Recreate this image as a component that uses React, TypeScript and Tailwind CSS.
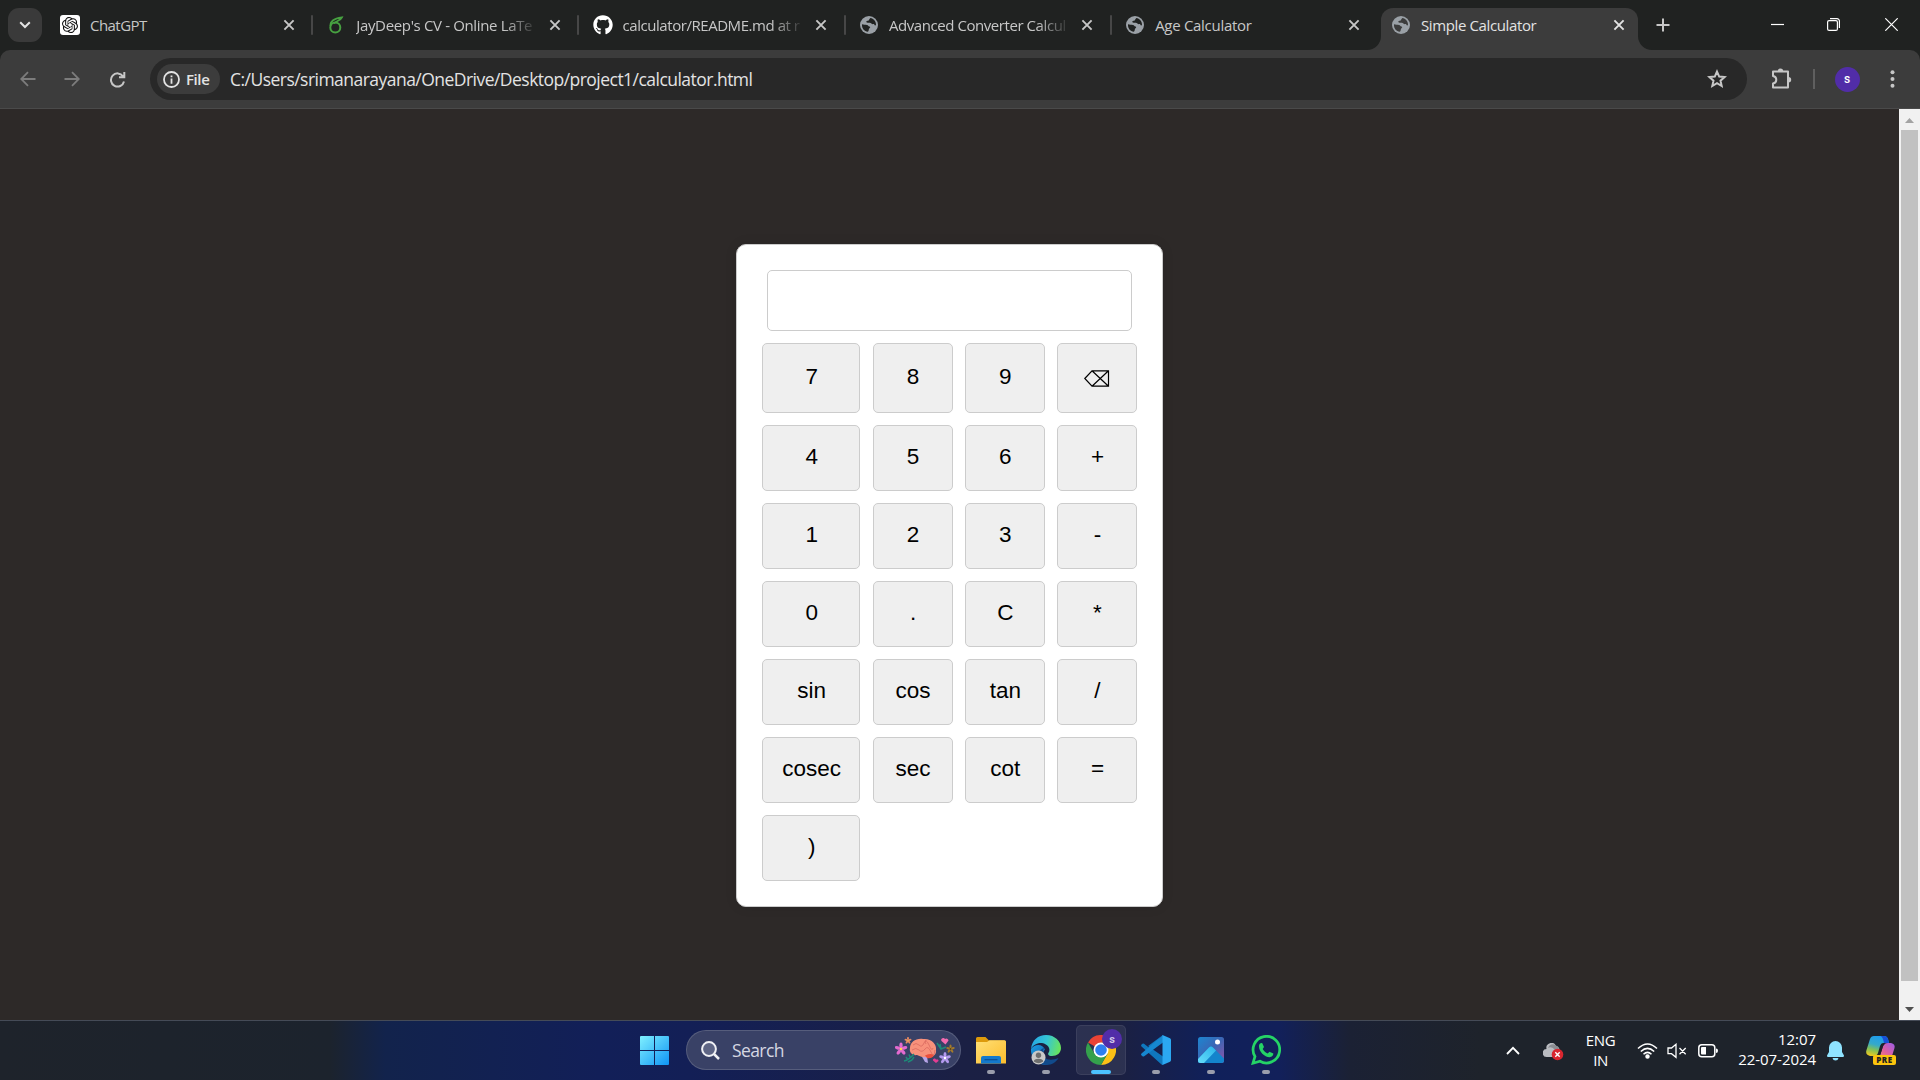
import React from "react";
import { FaGithub } from "react-icons/fa";
import { SiOpenai } from "react-icons/si";

const SEG = "font-['Open_Sans','Noto_Sans',sans-serif]";

function CloseX({ color = "#c8c8c8" }: { color?: string }) {
  return (
    <svg width="12" height="12" viewBox="0 0 12 12" stroke={color} strokeWidth="1.9" className="shrink-0">
      <path d="M1.4 1.4 10.6 10.6M10.6 1.4 1.4 10.6" />
    </svg>
  );
}

function Globe({ bg = "#202221" }: { bg?: string }) {
  return (
    <svg width="18" height="18" viewBox="0 0 18 18">
      <circle cx="9" cy="9" r="9" fill="#9aa0a6" />
      <path d="M2 8.200C3.500 8.900 5.500 8.600 7 9 8.300 9.200 8.200 10.300 9.400 10.400 10.400 10.500 10.400 11.300 9.700 11.900 9 12.400 8.900 13 8.800 13.800 8.700 14.700 8.300 15.400 7.900 15.800 4.200 15.300 1.700 12.400 2 8.200Z" fill={bg} />
      <path d="M10.400 2.100C13.600 2.700 16 5.500 16 8.800 15.700 9.600 15 9.600 14.600 8.900 14.100 8 13 8.500 12.200 8.100 11.300 7.600 10.900 6.700 9.700 6.800 8.300 6.900 6.300 7 6.300 5.800 6.300 4.900 7.300 5 8.200 4.800 9.300 4.500 9.200 3 10.400 2.100Z" fill={bg} />
    </svg>
  );
}

function ChatIcon() {
  return (
    <span className="flex size-5 items-center justify-center rounded-[3px] bg-white">
      <SiOpenai size={16} color="#111" />
    </span>
  );
}

function Overleaf() {
  return (
    <svg width="16" height="18" viewBox="0 0 16 18" fill="none" stroke="#47a141" strokeWidth="2">
      <circle cx="7.300" cy="11.500" r="5" />
      <path d="M2.500 10C2 6 5.500 2.500 14 1.300 12.500 4.500 9 4.500 6 7.500" strokeWidth="1.700" />
    </svg>
  );
}

type TabInfo = { title: string; icon: React.ReactNode; faded?: boolean; sep?: boolean; track: string };
const tabs: TabInfo[] = [
  { title: "ChatGPT", icon: <ChatIcon />, sep: true, track: "tracking-[-0.55px]" },
  { title: "JayDeep's CV - Online LaTe", icon: <Overleaf />, faded: true, sep: true, track: "tracking-[-0.35px]" },
  { title: "calculator/README.md at r", icon: <FaGithub size={20} color="#fff" />, faded: true, sep: true, track: "tracking-[-0.45px]" },
  { title: "Advanced Converter Calcul", icon: <Globe />, faded: true, sep: true, track: "tracking-[-0.43px]" },
  { title: "Age Calculator", icon: <Globe />, track: "tracking-[-0.3px]" },
];

function TabBody({ t, active }: { t: TabInfo; active?: boolean }) {
  return (
    <>
      <span className="flex w-5 shrink-0 justify-center">{t.icon}</span>
      <span
        className={`ml-2.5 w-[179px] shrink-0 whitespace-nowrap text-[15px] leading-5 ${t.track} ${active ? "text-[#e3e3e3]" : "text-[#c7c7c7]"} ${t.faded ? "[mask-image:linear-gradient(90deg,#000_148px,transparent_182px)]" : ""}`}
      >
        {t.title}
      </span>
      <span className={active ? "ml-[13px] flex" : "ml-[13.5px] flex"}>
        <CloseX color={active ? "#e3e3e3" : "#c7c7c7"} />
      </span>
    </>
  );
}

function TabStrip() {
  return (
    <div className="flex h-[50px] bg-[#202221]">
      <div className="ml-2 mt-2 flex h-[34px] w-[34px] items-center justify-center rounded-[11px] bg-[#3a3a3a]">
        <svg width="12" height="8" viewBox="0 0 12 8" fill="none" stroke="#e3e3e3" strokeWidth="2">
          <path d="M1.200 1.200 6 6 10.800 1.200" />
        </svg>
      </div>
      <div className="ml-[18px] flex">
        {tabs.map((t) => (
          <div key={t.title} className="flex w-[266.300px] items-center">
            <TabBody t={t} />
            {t.sep && <span className="ml-[16.500px] h-5 w-[2px] rounded-full bg-[#474747]" />}
          </div>
        ))}
      </div>
      <div className="relative -ml-[10.500px] mt-[7.500px] flex h-[42.500px] w-[257.500px] items-start rounded-t-[12px] bg-[#3c3c3c] pl-[10px] pt-[7.500px]">
        <svg className="absolute -left-[14px] bottom-0" width="14" height="14"><path d="M14 0V14H0A14 14 0 0 0 14 0" fill="#3c3c3c" /></svg>
        <svg className="absolute -right-[14px] bottom-0" width="14" height="14"><path d="M0 0V14H14A14 14 0 0 1 0 0" fill="#3c3c3c" /></svg>
        <div className="flex items-center">
          <TabBody t={{ title: "Simple Calculator", icon: <Globe bg="#3c3c3c" />, track: "tracking-[-0.38px]" }} active />
        </div>
      </div>
      <svg className="ml-[18px] mt-[18px]" width="14" height="14" stroke="#c7c7c7" strokeWidth="2"><path d="M7 .5V13.500M.5 7H13.500" /></svg>
      <div className="ml-auto flex pr-[22px] pt-[18px]">
        <svg width="13" height="13" stroke="#fff" strokeWidth="1.200"><path d="M0 6.500H13" /></svg>
        <svg className="ml-[43px]" width="13" height="13" fill="none" stroke="#fff" strokeWidth="1.200">
          <rect x=".6" y="2.600" width="9.800" height="9.800" rx="1.500" />
          <path d="M3 .6H10a2.400 2.400 0 0 1 2.400 2.400V10" />
        </svg>
        <svg className="ml-[45px]" width="13" height="13" stroke="#fff" strokeWidth="1.200"><path d="M.3 .3 12.700 12.700M12.700 .3 .3 12.700" /></svg>
      </div>
    </div>
  );
}

function Toolbar() {
  return (
    <div className="bg-[#202221]">
      <div className="flex h-[59px] items-center rounded-t-[10px] border-b border-[#4a4a4a] bg-[#3c3c3c]">
        <svg className="ml-5" width="16" height="16" fill="none" stroke="#7c7c7c" strokeWidth="1.800"><path d="M15.500 8H1.500M8 1.200 1.200 8 8 14.800" /></svg>
        <svg className="ml-[28px]" width="16" height="16" fill="none" stroke="#7c7c7c" strokeWidth="1.800"><path d="M.5 8H14.500M8 1.200 14.800 8 8 14.800" /></svg>
        <svg className="ml-[29px]" width="17" height="17" fill="none" stroke="#c7c7c7" strokeWidth="2"><path d="M14 5.200A6.600 6.600 0 1 0 15 10.500M15.300 1V6.300H10" /></svg>
        <div className="ml-[24px] flex h-[42px] w-[1597px] items-center rounded-full bg-[#282828] pl-[7px] pr-5">
          <div className="flex h-[30px] w-[63px] items-center rounded-full bg-[#3c3c3c] pl-[6px]">
            <svg width="17" height="17" fill="none" stroke="#e3e3e3" strokeWidth="1.800"><circle cx="8.500" cy="8.500" r="7.500" /><path d="M8.500 7.500V12.700M8.500 4.400V6.200" /></svg>
            <span className="ml-[6px] text-[15px] font-semibold leading-5 tracking-[-0.4px] text-[#e3e3e3]">File</span>
          </div>
          <span className="ml-[10px] whitespace-nowrap text-[17.500px] leading-6 tracking-[-0.53px] text-[#e3e3e3]">C:/Users/srimanarayana/OneDrive/Desktop/project1/calculator.html</span>
          <svg className="ml-auto" width="20" height="20" viewBox="0 0 20 20" fill="none" stroke="#c7c7c7" strokeWidth="2"><path d="M10 2.600 12.200 7.600 17.600 8.100 13.500 11.700 14.700 17 10 14.200 5.300 17 6.500 11.700 2.400 8.100 7.800 7.600Z" /></svg>
        </div>
        <svg className="ml-[23px]" width="22" height="22" viewBox="0 0 22 22" fill="none" stroke="#c7c7c7" strokeWidth="2">
          <path d="M3 3.500H18V19.500H3V15.500Q6.300 15 6.300 11.800T3 8Z" strokeLinejoin="round" />
          <path d="M7.800 3.200a2.700 2.700 0 0 1 5.400 0zM18.500 9a2.700 2.700 0 0 1 0 5.400z" fill="#c7c7c7" stroke="none" />
        </svg>
        <span className="ml-[21px] h-5 w-[1.500px] bg-[#5f5f5f]" />
        <span className="ml-[20px] flex size-[25px] items-center justify-center rounded-full bg-[#512da8] font-['Roboto',sans-serif] text-[12px] font-medium text-white">s</span>
        <svg className="ml-[30px]" width="5" height="18" fill="#c7c7c7"><circle cx="2.500" cy="2.200" r="2" /><circle cx="2.500" cy="9" r="2" /><circle cx="2.500" cy="15.800" r="2" /></svg>
      </div>
    </div>
  );
}

const keys = ["7", "8", "9", "⌫", "4", "5", "6", "+", "1", "2", "3", "-", "0", ".", "C", "*", "sin", "cos", "tan", "/", "cosec", "sec", "cot", "=", ")"];

function Calculator() {
  return (
    <div className="mt-[135px] h-[663px] w-[427px] rounded-[10px] border border-[#ccc] bg-white px-[25px] pt-[25px] shadow-[0_0_12px_rgba(0,0,0,0.1)]">
      <div className="mx-[5px] h-[61px] rounded-[5px] border border-[#ccc] bg-white" />
      <div className="mt-[12px] grid grid-cols-[98.400px_80px_80px_80px] grid-rows-[69.500px_repeat(6,65.500px)] gap-x-[12.200px] gap-y-[12.500px] font-['Liberation_Sans',Arial,sans-serif] text-[22.500px] text-black">
        {keys.map((k, i) => (
          <button key={k} className="flex items-center justify-center rounded-[5px] border border-[#ccc] bg-[#efefef] pl-px leading-6">
            {i === 3 ? (
              <svg className="mt-[2px]" width="26" height="17" viewBox="0 0 26 17" fill="none" stroke="#000" strokeWidth="1.200">
                <path d="M.8 8.500 8 .8H24.500V16.200H8ZM8 .8 24.500 16.200M24.500 .8 8 16.200" />
              </svg>
            ) : (
              <span className={i < 3 ? "-mt-[2px]" : "-mt-px"}>{k}</span>
            )}
          </button>
        ))}
      </div>
    </div>
  );
}

function Scrollbar() {
  return (
    <div className="flex w-[21px] flex-col items-center bg-[#f1f1f1]">
      <svg width="21" height="21" fill="#a3a3a3"><path d="M6 14H15L10.500 9Z" /></svg>
      <div className="h-[851px] w-[17px] bg-[#c1c1c1]" />
      <svg className="mt-auto" width="21" height="21" fill="#505050"><path d="M6 8H15L10.500 13Z" /></svg>
    </div>
  );
}

function Brain() {
  const flower = (x: number, y: number, r: number, c: string, m: string) => (
    <g key={`${x}-${y}`} fill={c}>
      {[0, 72, 144, 216, 288].map((a) => (
        <ellipse key={a} cx={x} cy={y - r * 0.6} rx={r * 0.28} ry={r * 0.5} transform={`rotate(${a} ${x} ${y})`} />
      ))}
      <circle cx={x} cy={y} r={r * 0.22} fill={m} />
    </g>
  );
  return (
    <svg width="60" height="28" viewBox="0 0 60 28">
      <path d="M26 18l6 1 1 7-3-1z" fill="#b7a5e8" />
      <path d="M15 11C15 5 21 1 28 2 36 1 42 7 41 13 42 18 36 22 31 20 28 21 25 19 22 18 17 19 14 15 15 11Z" fill="#f8917b" />
      <path d="M30 18.500Q36 16 39 18 37 22 32 21Z" fill="#ec4f3c" />
      <path d="M18 8q3-3 6 0t5-2 5 2 4 3M17 13q4-3 7 0t6-1 6 3 4-2M31 3q-2 2 0 4" fill="none" stroke="#d9695f" strokeWidth=".8" />
      {flower(6, 12, 6, "#e46ad0", "#ffd34e")}
      {flower(13, 3.5, 3.3, "#e88a62", "#ffc04e")}
      {flower(50, 21, 5.5, "#b49aef", "#fff")}
      {flower(55.5, 12, 4, "#a37a2b", "#5e4512")}
      <path d="M50.500 7.500 46.500 4A2 2 0 0 1 50 2 2.200 2.200 0 0 1 53.500 3.500Z" fill="#f36bb0" />
      <path d="M41 26 38 23.500A1.500 1.500 0 0 1 41 22.700 1.500 1.500 0 0 1 43.500 24Z" fill="#e43d93" />
      <path d="M9 24q5-1 10-7M11 20l2 3M14 17.500l1.500 3.500M13 25l4-2M17 23l2-3M42 6l4 6 5-2M46 12l-1-5" fill="none" stroke="#1d8a77" strokeWidth="1.500" />
    </svg>
  );
}

function Folder() {
  return (
    <svg width="30" height="27" viewBox="0 0 30 27">
      <path d="M0 1.500A1.500 1.500 0 0 1 1.500 0H9.500L13 3.500H28A2 2 0 0 1 30 5.500V10H0Z" fill="#dd9a0b" />
      <path d="M0 5H11L13.500 3.200H28.500A1.500 1.500 0 0 1 30 4.700V26.500H0Z" fill="url(#fold)" />
      <path d="M5 26.500V21A2 2 0 0 1 7 19H23A2 2 0 0 1 25 21V26.500Z" fill="#1479cc" />
      <path d="M8.500 22.700H21.500" stroke="#0c4d92" strokeWidth="1.200" />
      <defs><linearGradient id="fold" x1="0" y1="0" x2="1" y2="1"><stop stopColor="#ffdf76" /><stop offset="1" stopColor="#fcbd2c" /></linearGradient></defs>
    </svg>
  );
}

function Edge() {
  return (
    <svg width="30" height="30" viewBox="0 0 30 30">
      <defs>
        <linearGradient id="eg1" x1="0" y1="0.300" x2="1" y2="0.500"><stop stopColor="#25a6e4" /><stop offset=".5" stopColor="#35c5d5" /><stop offset="1" stopColor="#69e45c" /></linearGradient>
        <linearGradient id="eg2" x1="0" y1="0" x2="1" y2="1"><stop stopColor="#1b9de2" /><stop offset="1" stopColor="#0c4fa0" /></linearGradient>
      </defs>
      <path d="M0 14A15 15 0 0 0 17 29.900C11 27 9 20 14 14.500 12 9 4 8 0 14Z" fill="url(#eg2)" />
      <path d="M13 13C9 21 15 28 27.500 23 24 29 18 31 13 29.500 5 27 6 15 13 13Z" fill="#114a8b" />
      <path d="M0 14C1 5 7 0 15 0 24 0 30 6.500 30 13 30 18 26 21 21 21 17 21 16.500 19 17.700 17.500 20 14 17 9 11 8 6 7.500 2 10 0 14Z" fill="url(#eg1)" />
      <circle cx="7.500" cy="22.500" r="7" fill="#c9c9c9" />
      <circle cx="7.500" cy="20.300" r="2.700" fill="#6e6e6e" /><path d="M2.800 26.500Q3 23.800 7.500 23.800T12.200 26.500Q7.500 30 2.800 26.500Z" fill="#6e6e6e" />
    </svg>
  );
}

function Chrome() {
  return (
    <svg width="30" height="30" viewBox="0 0 30 30">
      <path d="M15 15 2 7.500A15 15 0 0 1 28 7.500H15Z" fill="#ea4335" />
      <path d="M15 7.500H28A15 15 0 0 1 15 30L21.500 18.700Z" fill="#fbc116" />
      <path d="M2 7.500A15 15 0 0 0 15 30L21.500 18.750 15 15 8.500 18.750Z" fill="#34a04c" />
      <circle cx="15" cy="15" r="7.500" fill="#fff" /><circle cx="15" cy="15" r="5.800" fill="#2d7ff0" />
    </svg>
  );
}

function VsCode() {
  return (
    <svg width="30" height="30" viewBox="0 0 30 30">
      <path d="M22 0 8.500 13 3 8.800Q2 8.200 1 9L.4 9.700Q-.3 10.600.5 11.500L20.500 29.500 22 30V21.500L7 11Z" fill="#0f77bd" />
      <path d="M22 0 .5 18.500Q-.3 19.500.4 20.300L1.500 21.200Q2.300 21.800 3.200 21.200L22 7.500Z" fill="#1687d0" />
      <path d="M21.500 0 29 3.300Q30 3.900 30 5V25Q30 26.200 29 26.700L21.500 30Z" fill="#2ba8f2" />
    </svg>
  );
}

function Photos() {
  return (
    <svg width="26" height="26" viewBox="0 0 26 26">
      <defs>
        <linearGradient id="ph1" x1="0" y1="0" x2="1" y2="1"><stop stopColor="#1c86d1" /><stop offset=".5" stopColor="#3c65b4" /><stop offset="1" stopColor="#9353a8" /></linearGradient>
        <linearGradient id="ph2" x1="0" y1="1" x2="1" y2="0"><stop stopColor="#65dcfb" /><stop offset="1" stopColor="#2bb4ea" /></linearGradient>
      </defs>
      <rect width="26" height="26" rx="2.500" fill="url(#ph1)" />
      <path d="M0 22 11 10.500Q13 8.500 15 10.500L26 21.500V23.500A2.500 2.500 0 0 1 23.500 26H2.500A2.500 2.500 0 0 1 0 23.500Z" fill="#1384cc" />
      <path d="M0 22 11 10.500Q13 8.500 15 10.500L18 13.500 6 26H2.500A2.500 2.500 0 0 1 0 23.500Z" fill="url(#ph2)" />
      <circle cx="19.500" cy="5" r="2.500" fill="#fff" />
    </svg>
  );
}

function WhatsApp() {
  return (
    <svg width="30" height="30" viewBox="0 0 30 30">
      <path d="M2 28.200 4 21.500A13.300 13.300 0 1 1 9 26.300Z" fill="none" stroke="#25d366" strokeWidth="2.700" />
      <path d="M8 10.500C8.500 8.500 10 7.800 11.300 8.200L13 12 11.700 14C13 16.300 14.500 17.600 16.700 18.500L18.500 16.700 22.300 18.500C22.500 20.500 20.700 22 18.700 22.200 13 22 7.500 16 8 10.500Z" fill="#25d366" />
    </svg>
  );
}

function TaskbarItem({ children, active }: { children: React.ReactNode; active?: boolean }) {
  return (
    <div className={`relative flex h-[50px] w-[50px] items-center justify-center rounded-[5px] border ${active ? "border-white/[0.07] bg-white/[0.08]" : "border-transparent"}`}>
      {children}
      <span className={`absolute bottom-0 h-1 rounded-full ${active ? "w-5 bg-[#4cc2ff]" : "w-2 bg-[#9a9dac]"}`} />
    </div>
  );
}

function Taskbar() {
  return (
    <div className="flex h-[60px] items-start border-t border-[#454b57] bg-[linear-gradient(90deg,#1e232b_0px,#1c232d_330px,#12234c_385px,#121f58_600px,#131f56_690px,#1b2044_960px,#1b2042_1120px,#10205a_1210px,#12205a_1280px,#1b2134_1350px,#1e232b_1480px,#1e232b_1920px)] pt-[4px]">
      <svg className="ml-[640px] mt-[11px]" width="29" height="29">
        <defs><linearGradient id="win" x1="0" y1="0" x2="29" y2="29" gradientUnits="userSpaceOnUse"><stop stopColor="#7ff0ff" /><stop offset="1" stopColor="#0f94f5" /></linearGradient></defs>
        <path d="M0 1Q0 0 1 0H14V14H0ZM15 0H28Q29 0 29 1V14H15ZM0 15H14V29H1Q0 29 0 28ZM15 15H29V28Q29 29 28 29H15Z" fill="url(#win)" />
      </svg>
      <div className="ml-[17px] mt-[5px] flex h-10 w-[275px] items-center rounded-full border border-white/15 bg-[#394166] pl-[14px] pr-[5px]">
        <svg width="19" height="19" fill="none" stroke="#f0f1f5" strokeWidth="2"><circle cx="8" cy="8" r="6.900" fill="#5e6585" /><path d="M13 13 18 18" strokeWidth="2.500" /></svg>
        <span className="ml-[12px] text-[17.500px] leading-6 tracking-[-0.6px] text-[#d5d7e2]">Search</span>
        <span className="ml-auto mt-px"><Brain /></span>
      </div>
      <div className="ml-[5px] flex gap-[5px]">
        <TaskbarItem><Folder /></TaskbarItem>
        <TaskbarItem><Edge /></TaskbarItem>
        <TaskbarItem active>
          <Chrome />
          <span className="absolute right-[3px] top-[3px] flex size-5 items-center justify-center rounded-full bg-[#512da8] font-['Roboto',sans-serif] text-[11px] font-bold leading-none text-[#cdc4e8]">s</span>
        </TaskbarItem>
        <TaskbarItem><VsCode /></TaskbarItem>
        <TaskbarItem><Photos /></TaskbarItem>
        <TaskbarItem><WhatsApp /></TaskbarItem>
      </div>
      <div className="ml-auto flex h-[50px] items-center text-[15px] leading-5 text-white">
        <svg width="14" height="9" fill="none" stroke="#fff" strokeWidth="1.800"><path d="M1 8 7 1.800 13 8" /></svg>
        <svg className="ml-[23px] mt-[4px]" width="21" height="18">
          <path d="M4 14A4 4 0 0 1 3.500 6 5 5 0 0 1 13 3 4 4 0 0 1 16 9L12 14Z" fill="#b9bbc0" />
          <path d="M5 5A5 5 0 0 1 13 2.500 4 4 0 0 1 16 6L12 7Q9 3 5 5Z" fill="#8b8d92" />
          <circle cx="14.500" cy="11.500" r="5.800" fill="#d9262f" /><path d="M12.300 9.300 16.700 13.700M16.700 9.300 12.300 13.700" stroke="#fff" strokeWidth="1.400" />
        </svg>
        <div className="ml-[21px] w-[31px] text-center tracking-[-0.4px]">ENG<br />IN</div>
        <svg className="ml-[21px] mt-[2px]" width="21" height="16" fill="none" stroke="#fff" strokeWidth="1.500"><path d="M1 5.500Q10.500-3.500 20 5.500M3.800 8.500Q10.500 2.200 17.200 8.500M6.500 11.200Q10.500 7.500 14.500 11.200" /><circle cx="10.500" cy="13.500" r="1.500" fill="#fff" /></svg>
        <svg className="ml-[9px] mt-[2px]" width="20" height="16" fill="none" stroke="#fff" strokeWidth="1.300"><path d="M1 5H4.500L9 1.300V14.300L4.500 10.700H1ZM12.500 5 18.700 11.200M18.700 5 12.500 11.200" /></svg>
        <svg className="ml-[11px] mt-[2px]" width="20" height="14"><rect x=".8" y=".8" width="16" height="11.900" rx="3" fill="none" stroke="#fff" strokeWidth="1.500" /><path d="M3 4Q3 3 4 3H8V10.500H4Q3 10.500 3 9.500ZM18 4.500Q20 4.500 20 6.700T18 9Z" fill="#fff" /></svg>
        <div className="-mt-[2px] ml-[20px] w-[78px] whitespace-nowrap text-right tracking-[-0.05px]">12:07<br />22-07-2024</div>
        <svg className="ml-[11px] mt-[2px]" width="17" height="20" fill="#8fe3ff"><path d="M8.500 0A6.500 6.500 0 0 1 15 6.500V11L17 14.500Q17 16 16 16H1Q0 16 0 14.500L2 11V6.500A6.500 6.500 0 0 1 8.500 0ZM5.500 17H11.500Q11 19.500 8.500 19.500T5.500 17Z" /></svg>
        <div className="relative ml-[22px] mr-[24px] mt-px h-[29px] w-[30px]">
          <svg width="30" height="25" viewBox="0 0 30 25">
            <defs>
              <linearGradient id="cp1" x1="0.600" y1="0" x2="0.300" y2="1"><stop stopColor="#1d9df0" /><stop offset=".45" stopColor="#35a9c9" /><stop offset=".7" stopColor="#7fc05a" /><stop offset="1" stopColor="#e8c821" /></linearGradient>
              <linearGradient id="cp2" x1="1" y1="0" x2="0" y2="1"><stop stopColor="#9a5ce8" /><stop offset=".5" stopColor="#e0609f" /><stop offset="1" stopColor="#f79a5c" /></linearGradient>
            </defs>
            <path d="M8 0H18Q21 0 22 3L23 7H17Q15 7 14 10L12 17Q11 20 8 20H4Q-1 19 .5 14L4 3Q5 0 8 0Z" fill="url(#cp1)" />
            <path d="M14.500 0H18Q21 0 22 3L23 7H18Q17 1 14.500 0Z" fill="#1750d8" />
            <path d="M22 7H25Q29.500 8 28.500 12L26 20Q25 24 21 24H10Q13 23 14 20L17 10Q18 7 22 7Z" fill="url(#cp2)" />
            <path d="M17.500 7.500H19.500Q17.500 8.500 16.800 11L14.500 18Q14 20 12 20L15 11Q15.800 8 17.500 7.500Z" fill="#1e232b" />
          </svg>
          <span className="absolute bottom-0 left-[7px] flex h-[10px] w-[23px] items-center justify-center rounded-[2px] bg-[#fcc40d] text-[8px] font-extrabold leading-none tracking-[0.500px] text-[#222]">PRE</span>
        </div>
      </div>
    </div>
  );
}

export default function App() {
  return (
    <div className={`flex h-[1080px] w-[1920px] flex-col overflow-hidden bg-[#2d2928] ${SEG}`}>
      <TabStrip />
      <Toolbar />
      <div className="flex h-[911px]">
        <div className="flex flex-1 justify-center">
          <Calculator />
        </div>
        <Scrollbar />
      </div>
      <Taskbar />
    </div>
  );
}
